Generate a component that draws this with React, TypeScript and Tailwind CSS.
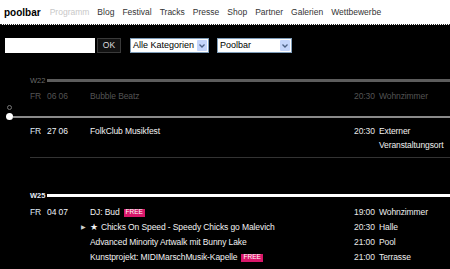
import React from 'react'

type Ev = {
  day?: string
  date?: string
  title: string
  star?: boolean
  free?: boolean
  time: string
  venue: string
}

const nav = ['Blog', 'Festival', 'Tracks', 'Presse', 'Shop', 'Partner', 'Galerien', 'Wettbewerbe']

const w25: Ev[] = [
  { day: 'FR', date: '04 07', title: 'DJ: Bud', free: true, time: '19:00', venue: 'Wohnzimmer' },
  { title: 'Chicks On Speed - Speedy Chicks go Malevich', star: true, time: '20:30', venue: 'Halle' },
  { title: 'Advanced Minority Artwalk mit Bunny Lake', time: '21:00', venue: 'Pool' },
  { title: 'Kunstprojekt: MIDIMarschMusik-Kapelle', free: true, time: '21:00', venue: 'Terrasse' },
]

function Free() {
  return (
    <span className="ml-[4px] inline-flex h-[8px] items-center bg-[#d8176a] px-[2px] text-[6.5px] leading-none tracking-normal text-white">
      FREE
    </span>
  )
}

function Row({ ev }: { ev: Ev }) {
  return (
    <div className="flex h-[15px] items-center text-[8.5px] leading-[15px] tracking-[-0.1px]">
      <div className="w-[17px] text-[#dfe8f5]">{ev.day}</div>
      <div className="flex w-[43px] justify-between pr-[4px] text-[#eef2f8]">
        <span>{ev.date}</span>
        {ev.star && <span className="text-[6px] text-[#ccc]">▶</span>}
      </div>
      <div className="flex w-[264px] items-center text-[#f2f2f2]">
        {ev.star && <span className="mr-[3px] text-[9px]">★</span>}
        <span>{ev.title}</span>
        {ev.free && <Free />}
      </div>
      <div className="w-[25px] text-[#e8e8e8]">{ev.time}</div>
      <div className="text-[#f0f0f0]">{ev.venue}</div>
    </div>
  )
}

function Select({ label, width }: { label: string; width: string }) {
  return (
    <div className={`flex h-[15px] items-center border border-[#7f9db9] bg-white pl-[2px] pr-[1px] ${width}`}>
      <span className="flex-1 text-[9px] leading-none text-black">{label}</span>
      <span className="flex h-[11px] w-[10px] items-center justify-center rounded-[1px] bg-[#c4d5fb]">
        <svg width="6" height="4" viewBox="0 0 6 4">
          <path d="M0.5 0.5 L3 3 L5.5 0.5" stroke="#4d6185" strokeWidth="1.3" fill="none" />
        </svg>
      </span>
    </div>
  )
}

export default function App() {
  return (
    <div className="h-[269px] w-[450px] overflow-hidden bg-black font-['Liberation_Sans',Arial,sans-serif]">
      {/* header */}
      <div className="flex h-[25px] items-center gap-[8px] border-b border-dotted border-[#222] bg-white pl-[4px]">
        <span className="mr-[1px] text-[10px] font-bold text-black">poolbar</span>
        <span className="text-[8.5px] text-[#c8c8c8]">Programm</span>
        {nav.map((n) => (
          <span key={n} className="text-[8.5px] text-[#333]">
            {n}
          </span>
        ))}
      </div>

      {/* filter form */}
      <div className="flex items-center pl-[5px] pt-[13px]">
        <div className="h-[15px] w-[90px] bg-white" />
        <div className="ml-[2px] flex h-[15px] w-[24px] items-center justify-center border border-[#3a3a3a] bg-[#121212] text-[8.5px] text-[#ddd]">
          OK
        </div>
        <div className="ml-[9px]">
          <Select label="Alle Kategorien" width="w-[79px]" />
        </div>
        <div className="ml-[8px]">
          <Select label="Poolbar" width="w-[75px]" />
        </div>
      </div>

      {/* W22 */}
      <div className="mt-[21px] flex h-[13px] items-center pl-[30px]">
        <span className="w-[17px] text-[7.5px] text-[#6a6a6a]">W22</span>
        <div className="h-[3px] flex-1 bg-[#5c5c5c]" />
      </div>
      <div className="mt-[2px] flex h-[15px] items-center pl-[30px] text-[8.5px] leading-[15px] tracking-[-0.1px] text-[#545454]">
        <div className="w-[17px]">FR</div>
        <div className="w-[43px]">06 06</div>
        <div className="w-[264px]">Bubble Beatz</div>
        <div className="w-[25px]">20:30</div>
        <div>Wohnzimmer</div>
      </div>

      {/* now marker */}
      <div className="mt-[1px] pl-[7px]">
        <div className="h-[5px] w-[5px] rounded-full border border-[#777]" />
      </div>
      <div className="mt-[3px] flex h-[7px] items-center pl-[6px]">
        <div className="h-[7px] w-[7px] shrink-0 rounded-full bg-white" />
        <div className="h-[2px] flex-1 bg-[#8a8a8a]" />
      </div>

      <div className="mt-[4px] flex pl-[30px] text-[8.5px] leading-[14px] tracking-[-0.1px]">
        <div className="w-[17px] text-[#dfe8f5]">FR</div>
        <div className="w-[43px] text-[#eef2f8]">27 06</div>
        <div className="w-[264px] text-[#f2f2f2]">FolkClub Musikfest</div>
        <div className="w-[25px] text-[#e8e8e8]">20:30</div>
        <div className="w-[66px] text-[#f0f0f0]">Externer Veranstaltungsort</div>
      </div>
      <div className="ml-[30px] mt-[5px] h-[1px] bg-[#333]" />

      {/* W25 */}
      <div className="mt-[31px] flex h-[13px] items-center pl-[30px]">
        <span className="w-[17px] text-[7.5px] font-bold text-[#e4ebf5]">W25</span>
        <div className="h-[3px] flex-1 bg-white" />
      </div>
      <div className="mt-[3px] pl-[30px]">
        {w25.map((ev, i) => (
          <Row key={i} ev={ev} />
        ))}
      </div>
    </div>
  )
}
